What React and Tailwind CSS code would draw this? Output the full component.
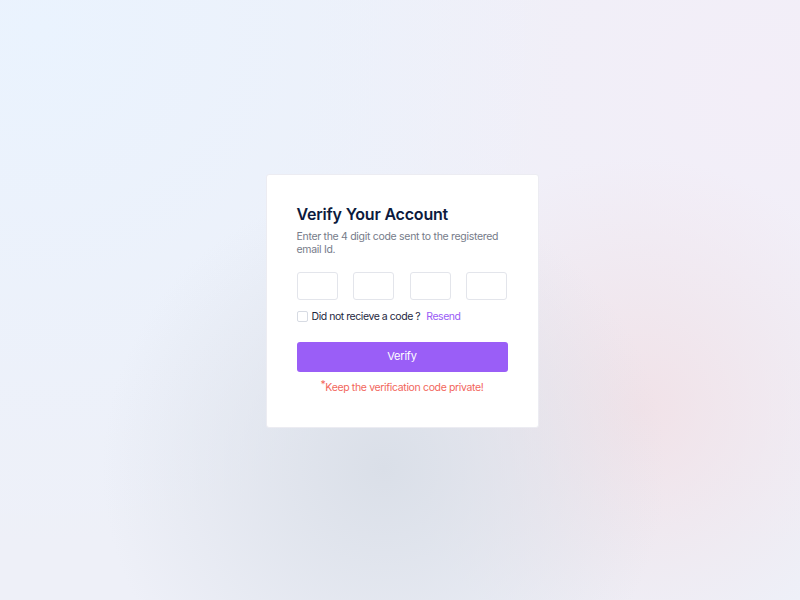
import React from 'react';

// OTP verification card on a soft blurred backdrop
const App = () => {
  const boxes = [0, 1, 2, 3];

  return (
    <div
      className="w-[800px] h-[600px] flex items-center justify-center bg-[#eef0f8] bg-[radial-gradient(circle_at_48%_78%,#dadfe8_0%,transparent_45%),radial-gradient(circle_at_80%_68%,#f1e2e8_0%,transparent_33%),radial-gradient(circle_at_5%_5%,#eaf3fe_0%,transparent_55%),radial-gradient(circle_at_95%_15%,#f3eef8_0%,transparent_50%)]"
      style={{ fontFamily: 'Inter, "Noto Sans", sans-serif' }}
    >
      <div className="w-[273px] bg-white rounded-[3px] border border-[#ececf2] pt-[28px] pb-[32px] px-[30px] mt-[1px] ml-[4px]">
        <h1 className="text-[16px] font-semibold text-[#0c1a3d] leading-[22px] tracking-[-0.2px]">Verify Your Account</h1>
        <p className="mt-[5px] text-[10.5px] leading-[13px] text-[#767b89] tracking-[-0.3px] pr-[8px]">
          Enter the 4 digit code sent to the registered email Id.
        </p>

        <div className="mt-[16px] flex justify-between">
          {boxes.map(i => (
            <input
              key={i}
              type="text"
              maxLength={1}
              className="w-[41px] h-[28px] rounded-[3px] border border-[#e3e5eb] outline-none text-center text-sm"
            />
          ))}
        </div>

        <label className="mt-[10px] h-[14px] flex items-center gap-[4px] text-[10.5px] tracking-[-0.45px]">
          <span className="w-[11px] h-[11px] rounded-[2px] border border-[#d7dbe3] bg-white" />
          <span className="text-[#1e2740]">Did not recieve a code ?</span>
          <span className="ml-[2px] text-[#9a5cf6]">Resend</span>
        </label>

        <button className="mt-[18px] w-full h-[30px] rounded-[3px] bg-[#9a5ef7] text-white text-[11px] tracking-[-0.2px]">
          Verify
        </button>

        <p className="mt-[9px] leading-[14px] text-center text-[10.5px] text-[#f2665c] tracking-[-0.35px]">
          <span className="relative -top-[3px]">*</span>Keep the verification code private!
        </p>
      </div>
    </div>
  );
};

export default App;
